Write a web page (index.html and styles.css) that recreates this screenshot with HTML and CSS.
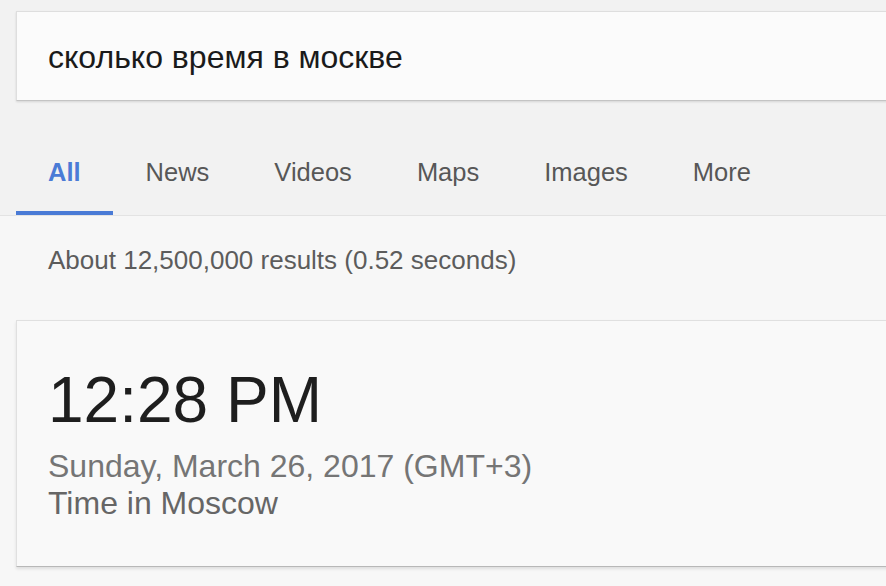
FILE: index.html
```html
<!DOCTYPE html>
<html lang="ru">
<head>
<meta charset="utf-8">
<title>сколько время в москве</title>
<link rel="stylesheet" href="styles.css">
</head>
<body>
<header class="top">
  <div class="search">
    <span class="query">сколько время в москве</span>
  </div>
  <nav class="tabs">
    <a class="tab active">All</a>
    <a class="tab">News</a>
    <a class="tab">Videos</a>
    <a class="tab">Maps</a>
    <a class="tab">Images</a>
    <a class="tab">More</a>
  </nav>
</header>
<main class="results">
  <div class="stats">About 12,500,000 results (0.52 seconds)</div>
  <section class="card">
    <div class="time">12:28 PM</div>
    <div class="date">Sunday, March 26, 2017 (GMT+3)</div>
    <div class="place">Time in Moscow</div>
  </section>
</main>
</body>
</html>
```
FILE: styles.css
```css
html, body {
  margin: 0;
  padding: 0;
  overflow: hidden;
}
body {
  width: 886px;
  height: 586px;
  background: #f7f7f7;
  font-family: "Liberation Sans", Arial, sans-serif;
}
.top {
  background: #f2f2f2;
  padding-top: 11px;
  border-bottom: 1px solid #e3e3e3;
}
.search {
  margin-left: 16px;
  margin-right: -20px;
  height: 88px;
  display: flex;
  align-items: center;
  padding-left: 31px;
  background: #fbfbfb;
  border: 1px solid #dedede;
  border-bottom-color: #c4c4c4;
  box-shadow: 0 1px 2px rgba(0, 0, 0, 0.12);
}
.query {
  font-size: 32px;
  line-height: 34px;
  padding-top: 2px;
  color: #1a1a1a;
}
.tabs {
  display: flex;
  margin-top: 30px;
  padding-left: 16px;
}
.tab {
  padding: 29px 32.5px 27px;
  font-size: 25.5px;
  line-height: 24px;
  color: #575757;
  border-bottom: 4px solid transparent;
}
.tab.active {
  padding-left: 32px;
  color: #4a7bd6;
  font-weight: bold;
  border-bottom-color: #4a7bd6;
}
.results {
  padding-top: 29px;
}
.stats {
  padding-left: 48px;
  font-size: 26px;
  line-height: 30px;
  color: #5c5c5c;
}
.card {
  margin: 45px -20px 0 16px;
  padding: 47px 31px 44px;
  background: #f9f9f9;
  border: 1px solid #e0e0e0;
  border-bottom-color: #b8b8b8;
  box-shadow: 0 2px 3px rgba(0, 0, 0, 0.1);
}
.time {
  font-size: 64px;
  line-height: 64px;
  color: #1e1e1e;
  margin-bottom: 16px;
}
.date,
.place {
  font-size: 32px;
  line-height: 37px;
}
.date {
  color: #757575;
}
.place {
  color: #666;
}
```
